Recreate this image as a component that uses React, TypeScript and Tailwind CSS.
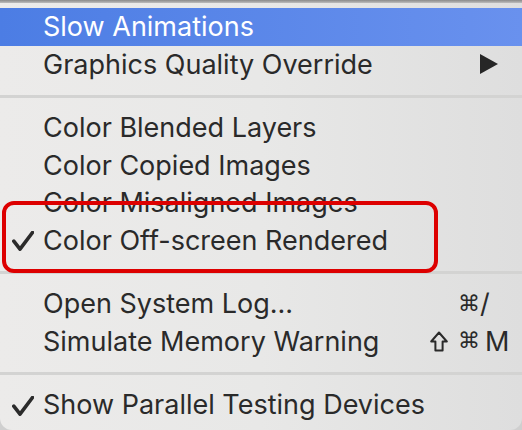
import React from "react";

const Check = () => (
  <svg width="22" height="20" viewBox="0 0 22 20" className="absolute left-[12px] top-1/2 -translate-y-1/2 mt-[1px]">
    <path d="M1.8 10.2 L8 18.2 L20.5 1.5" fill="none" stroke="#2b2b2b" strokeWidth="3.6" strokeLinecap="round" strokeLinejoin="round" />
  </svg>
);

const Row = ({
  label,
  checked,
  highlight,
  right,
}: {
  label: string;
  checked?: boolean;
  highlight?: boolean;
  right?: React.ReactNode;
}) => (
  <div
    className={
      "relative flex h-[37.5px] items-center pl-[43px] pr-[14px] " +
      (highlight ? "bg-gradient-to-r from-[#4c7de4] to-[#6991ee] text-white" : "text-[#2a2a2a]")
    }
  >
    {checked && <Check />}
    <span className="flex-1 whitespace-nowrap">{label}</span>
    {right}
  </div>
);

const Sep = () => (
  <div className="flex h-[26px] items-center">
    <div className="h-[3px] w-full bg-[#d3d3d2]" />
  </div>
);

const ShiftIcon = () => (
  <svg width="18" height="21" viewBox="0 0 18 21" className="mr-[10px] shrink-0">
    <path d="M9 1.5 L16.8 10.5 L12.6 10.5 L12.6 19.5 L5.4 19.5 L5.4 10.5 L1.2 10.5 Z" fill="none" stroke="#2a2a2a" strokeWidth="2" strokeLinejoin="round" />
  </svg>
);

const Shortcut = ({ shift, k, gap }: { shift?: boolean; k: string; gap: string }) => (
  <div className="flex shrink-0 items-center justify-end">
    {shift && <ShiftIcon />}
    <span className="shrink-0 font-['DejaVu_Sans'] text-[22px]">⌘</span>
    <span className={"w-[28px] shrink-0 text-left " + gap}>{k}</span>
  </div>
);

export default function App() {
  return (
    <div className="h-[430px] w-[522px] overflow-hidden bg-[#cfcfcf]">
      <div
        className="relative h-[430px] w-[522px] overflow-hidden rounded-b-[12px] bg-gradient-to-r from-[#ecebea] via-[#e8e8e7] to-[#dedede] text-[27px] font-['Inter',sans-serif] leading-none"
      >
        <div className="h-[3px] bg-gradient-to-b from-[#8a8a8a] to-[#bdbdbd]" />
        <div className="h-[5px]" />
        <Row label="Slow Animations" highlight />
        <Row
          label="Graphics Quality Override"
          right={
            <svg width="18" height="20" viewBox="0 0 18 20" className="mr-[10px]">
              <polygon points="0,0 18,10 0,20" fill="#262626" />
            </svg>
          }
        />
        <Sep />
        <Row label="Color Blended Layers" />
        <Row label="Color Copied Images" />
        <Row label="Color Misaligned Images" />
        <Row label="Color Off-screen Rendered" checked />
        <Sep />
        <Row label="Open System Log..." right={<Shortcut k="/" gap="ml-0" />} />
        <Row label="Simulate Memory Warning" right={<Shortcut shift k="M" gap="pl-[5px]" />} />
        <Sep />
        <Row label="Show Parallel Testing Devices" checked />
        <div className="pointer-events-none absolute left-[2px] top-[201px] h-[72px] w-[436px] rounded-[12px] border-[4px] border-[#dd0000]" />
      </div>
    </div>
  );
}
